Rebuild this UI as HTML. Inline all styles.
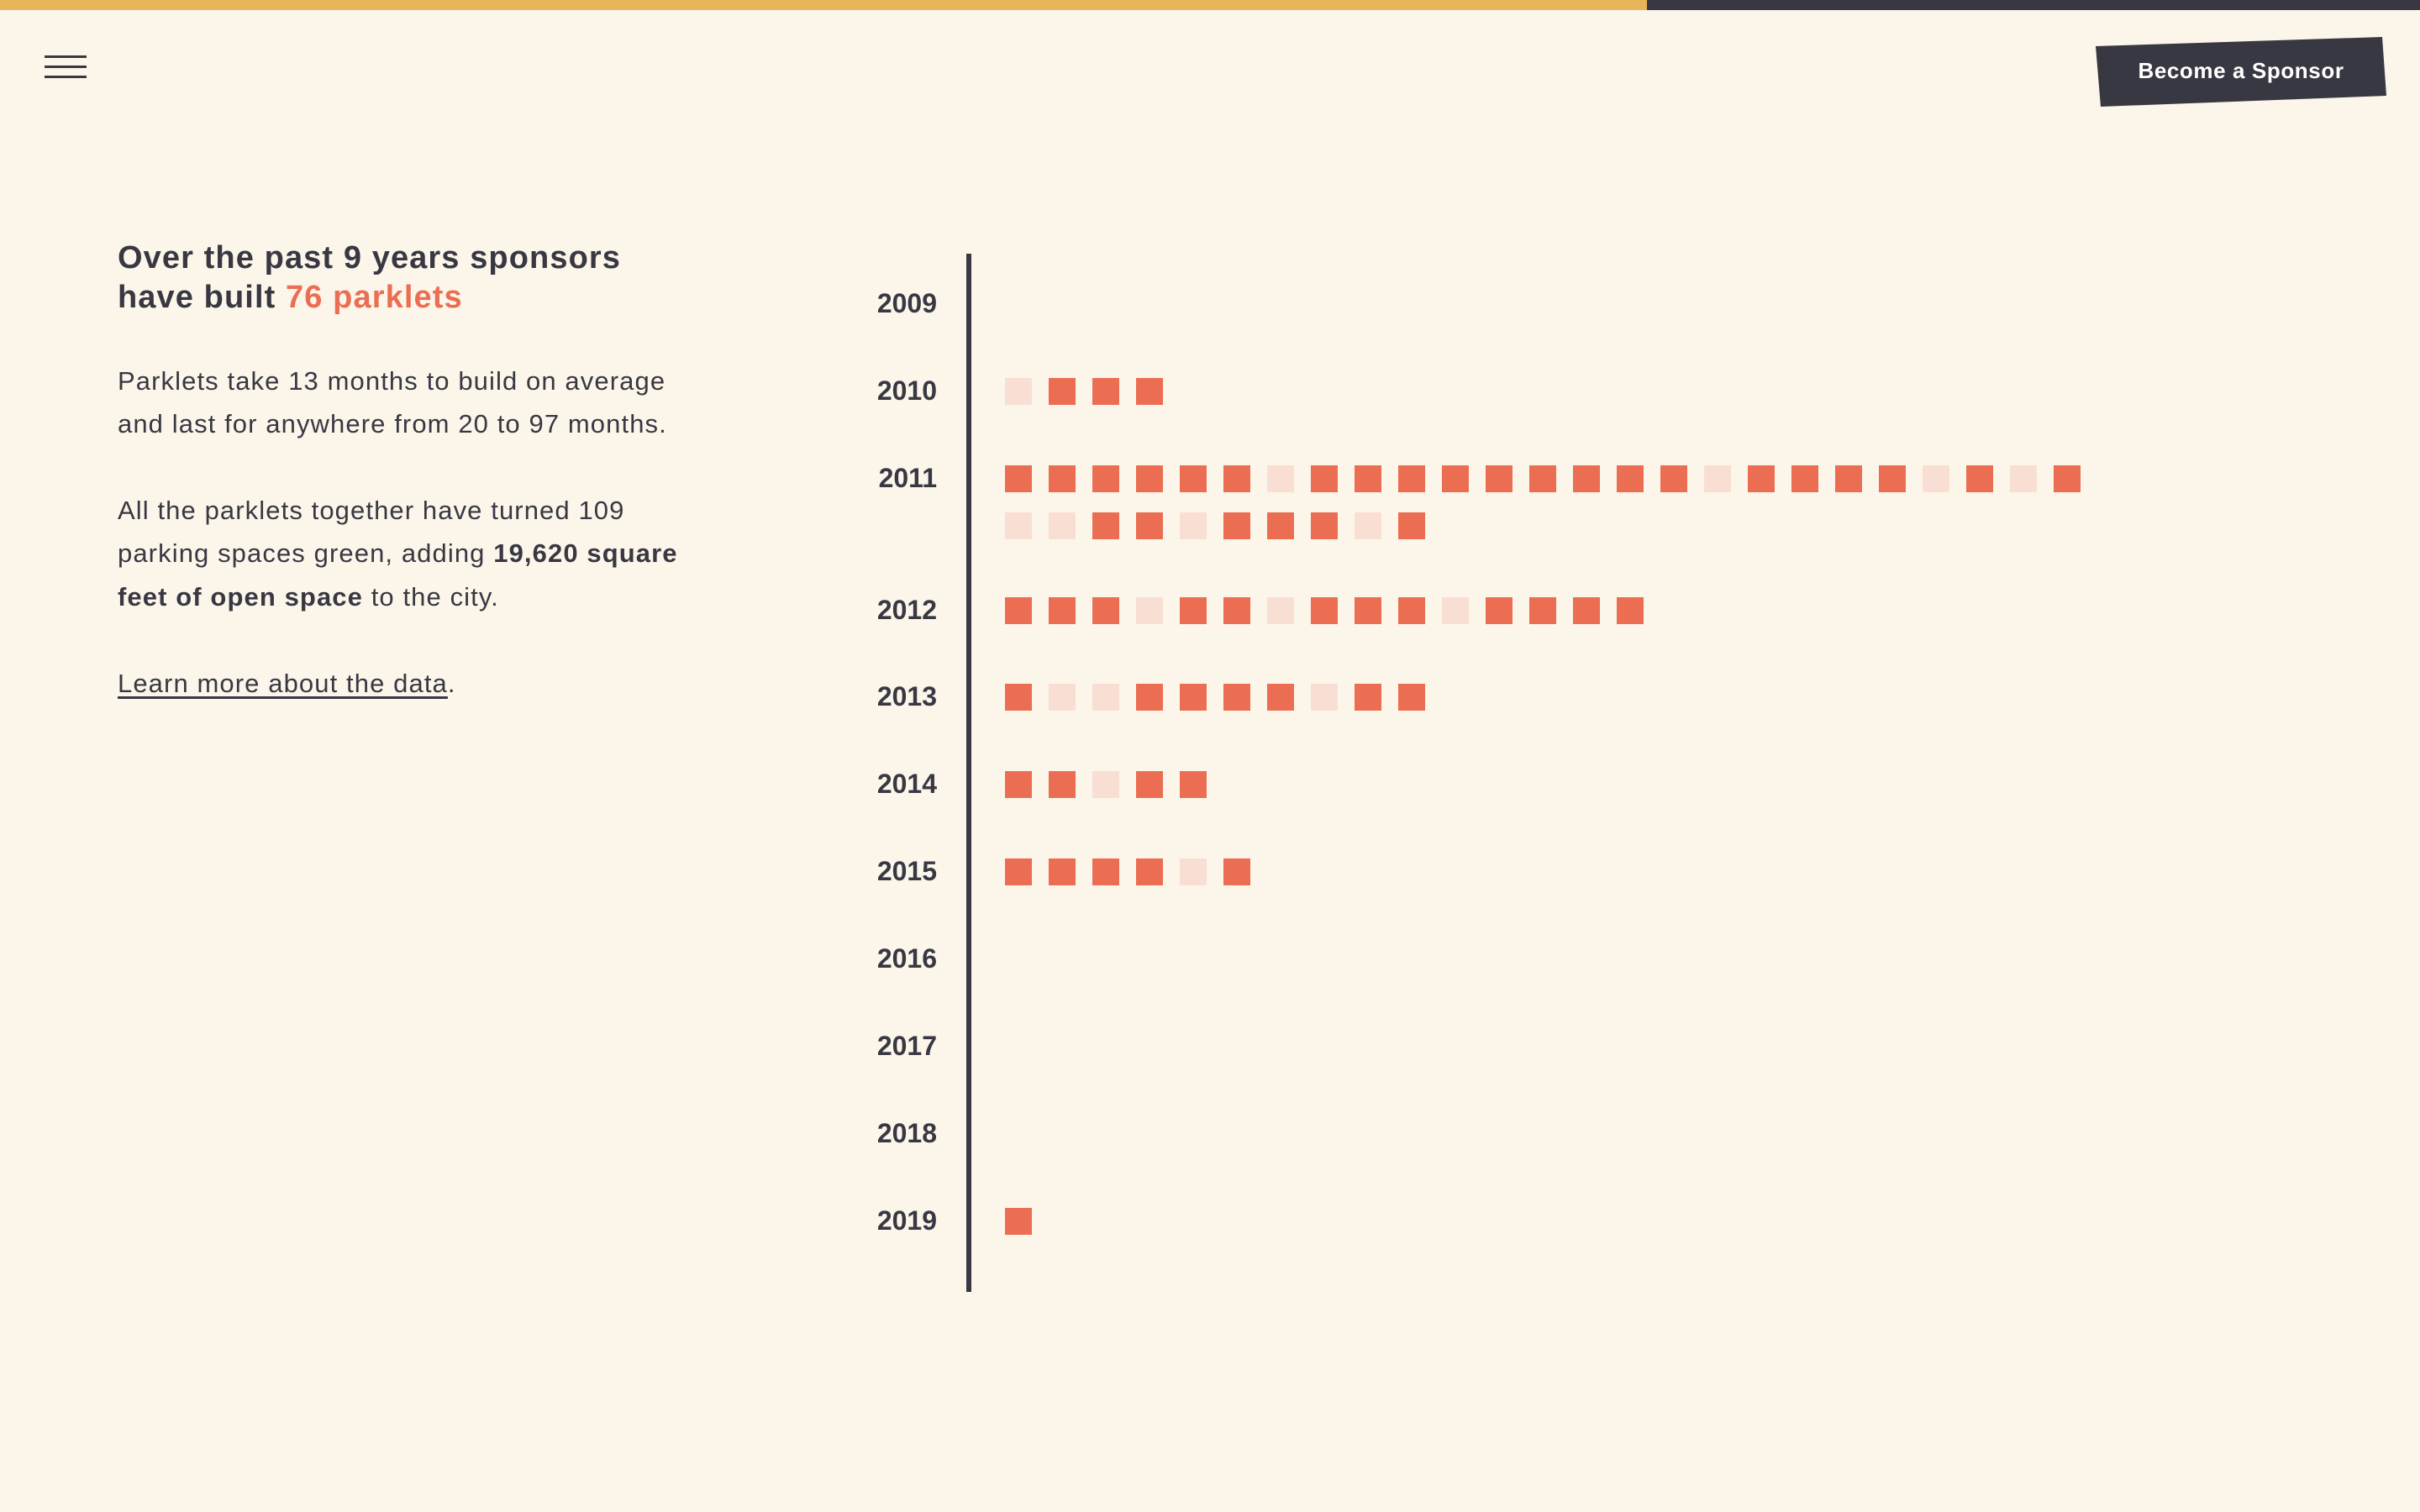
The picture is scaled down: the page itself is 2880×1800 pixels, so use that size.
<!DOCTYPE html>
<html><head><meta charset="utf-8"><style>
*{margin:0;padding:0;box-sizing:border-box}
html,body{width:2880px;height:1800px;overflow:hidden;background:#fcf5ea;font-family:"Liberation Sans",sans-serif;color:#383842}
.a{position:absolute;white-space:nowrap;line-height:1}
.h{font-size:38px;font-weight:bold;left:140px;letter-spacing:1.1px}
.b{font-size:31px;left:140px;color:#383842;letter-spacing:1.1px}
.y{font-size:32px;font-weight:bold;right:1765px;text-align:right}
.r{position:absolute;left:1196px;display:flex;gap:20px}
.r i{display:block;width:32px;height:32px;background:#eb6e52}
.r i.l{background:#f9dfd3}
</style></head><body>
<div class="a" style="left:0;top:0;width:1960px;height:12px;background:#e8b558"></div>
<div class="a" style="left:1960px;top:0;width:920px;height:12px;background:#383842"></div>
<div class="a" style="left:53px;top:66px;width:50px;height:3px;background:#383842"></div>
<div class="a" style="left:53px;top:78px;width:50px;height:3px;background:#383842"></div>
<div class="a" style="left:53px;top:90px;width:50px;height:3px;background:#383842"></div>
<svg class="a" style="left:0;top:0" width="2880" height="200"><polygon points="2494,55 2835,44 2840,114 2500,127" fill="#383842"/><text x="2667" y="93" fill="#fff" font-family="Liberation Sans" font-weight="bold" font-size="26" letter-spacing="0.6" text-anchor="middle">Become a Sponsor</text></svg>

<div class="a h" style="top:288px">Over the past 9 years sponsors</div>
<div class="a h" style="top:335px">have built <span style="color:#eb6e52">76 parklets</span></div>
<div class="a b" style="top:438px">Parklets take 13 months to build on average</div>
<div class="a b" style="top:489px">and last for anywhere from 20 to 97 months.</div>
<div class="a b" style="top:592px">All the parklets together have turned 109</div>
<div class="a b" style="top:643px">parking spaces green, adding <b>19,620 square</b></div>
<div class="a b" style="top:695px"><b>feet of open space</b> to the city.</div>
<div class="a b" style="top:798px"><span style="text-decoration:underline;text-underline-offset:5px">Learn more about the data</span>.</div>

<div class="a" style="left:1150px;top:302px;width:6px;height:1236px;background:#383842"></div>
<div class="a y" style="top:345px">2009</div>
<div class="a y" style="top:449px">2010</div>
<div class="a y" style="top:553px">2011</div>
<div class="a y" style="top:710px">2012</div>
<div class="a y" style="top:813px">2013</div>
<div class="a y" style="top:917px">2014</div>
<div class="a y" style="top:1021px">2015</div>
<div class="a y" style="top:1125px">2016</div>
<div class="a y" style="top:1229px">2017</div>
<div class="a y" style="top:1333px">2018</div>
<div class="a y" style="top:1437px">2019</div>

<div class="r" style="top:450px"><i class="l"></i><i></i><i></i><i></i></div>
<div class="r" style="top:554px"><i></i><i></i><i></i><i></i><i></i><i></i><i class="l"></i><i></i><i></i><i></i><i></i><i></i><i></i><i></i><i></i><i></i><i class="l"></i><i></i><i></i><i></i><i></i><i class="l"></i><i></i><i class="l"></i><i></i></div>
<div class="r" style="top:610px"><i class="l"></i><i class="l"></i><i></i><i></i><i class="l"></i><i></i><i></i><i></i><i class="l"></i><i></i></div>
<div class="r" style="top:711px"><i></i><i></i><i></i><i class="l"></i><i></i><i></i><i class="l"></i><i></i><i></i><i></i><i class="l"></i><i></i><i></i><i></i><i></i></div>
<div class="r" style="top:814px"><i></i><i class="l"></i><i class="l"></i><i></i><i></i><i></i><i></i><i class="l"></i><i></i><i></i></div>
<div class="r" style="top:918px"><i></i><i></i><i class="l"></i><i></i><i></i></div>
<div class="r" style="top:1022px"><i></i><i></i><i></i><i></i><i class="l"></i><i></i></div>
<div class="r" style="top:1438px"><i></i></div>
</body></html>
